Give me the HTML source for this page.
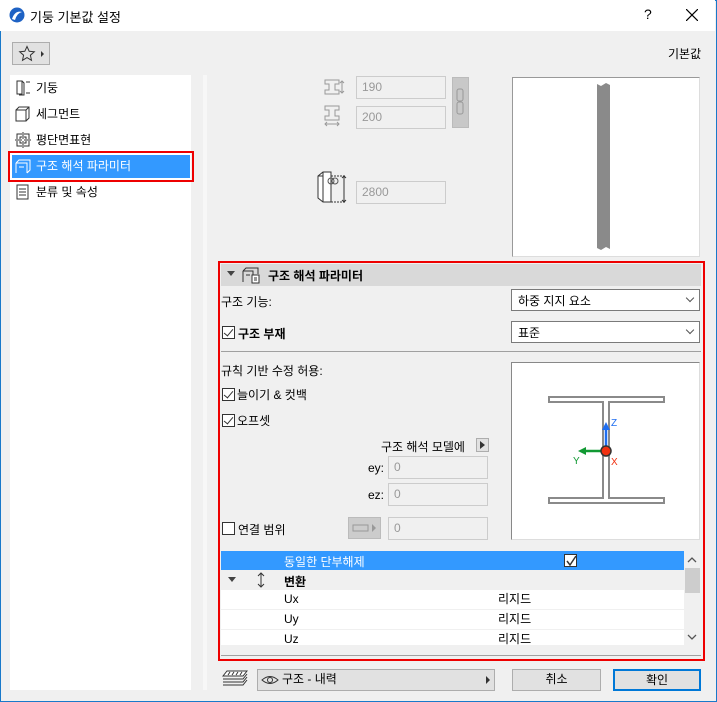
<!DOCTYPE html>
<html><head><meta charset="utf-8"><style>
*{box-sizing:border-box;margin:0;padding:0}
body{width:717px;height:702px;overflow:hidden;font-family:"Liberation Sans","Noto Sans CJK KR",sans-serif;font-size:12px;color:#000;background:#f0f0f0;position:relative}
.a{position:absolute}
.win{position:absolute;left:0;top:0;width:717px;height:702px;border:1px solid #1979ca;background:#f0f0f0}
.title{position:absolute;left:0;top:0;width:715px;height:31px;background:#fff}
.inp{position:absolute;background:#f0f0f0;border:1px solid #ccc;color:#999;padding:3px 0 0 5px;height:23px;width:90px}
.btn{position:absolute;border:1px solid #adadad;background:#e1e1e1;text-align:center;line-height:19px}
.dd{position:absolute;background:#fff;border:1px solid #7a7a7a;padding:2px 6px;height:22px;width:189px}
.dd:after{content:"";position:absolute;right:6px;top:5px;width:5px;height:5px;border-right:1px solid #555;border-bottom:1px solid #555;transform:rotate(45deg)}
.cb{position:absolute;width:13px;height:13px;border:1px solid #333;background:#fff}
.cb.c:after{content:"";position:absolute;left:3px;top:0px;width:4px;height:8px;border-right:1.5px solid #333;border-bottom:1.5px solid #333;transform:rotate(40deg)}
.li{position:absolute;left:18px;height:20px;line-height:20px}
.row{position:absolute;left:221px;width:463px;height:19px;line-height:19px;background:#fff}
</style></head><body>
<div class="win"></div>
<div class="title"></div>
<svg class="a" style="left:9px;top:7px" width="16" height="16"><circle cx="8" cy="8" r="7.5" fill="#1e62c4"/><path d="M3 12 Q6 3 13 5 Q8 6 6 13Z" fill="#fff"/></svg>
<div class="a" style="left:30px;top:7px;font-size:13px">기둥 기본값 설정</div>
<div class="a" style="left:644px;top:6px;font-size:14px">?</div>
<svg class="a" style="left:686px;top:9px" width="12" height="12"><path d="M0 0L12 12M12 0L0 12" stroke="#000" stroke-width="1.2"/></svg>

<div class="btn" style="left:12px;top:42px;width:38px;height:23px"></div>
<svg class="a" style="left:18px;top:45px" width="30" height="18"><path d="M9 1.5L11.2 6.3 16.3 6.8 12.4 10.2 13.5 15.3 9 12.6 4.5 15.3 5.6 10.2 1.7 6.8 6.8 6.3Z" fill="none" stroke="#333"/><path d="M23 6L26 9 23 12Z" fill="#333"/></svg>
<div class="a" style="left:668px;top:45px">기본값</div>

<div class="a" style="left:10px;top:75px;width:181px;height:615px;background:#fff"></div>
<svg class="a" style="left:15px;top:80px" width="16" height="16"><rect x="2" y="1" width="5" height="13" fill="none" stroke="#333"/><path d="M7 1L9 3V15H4" fill="none" stroke="#333"/><path d="M11 2h4M11 13h4" stroke="#333"/></svg>
<div class="li" style="left:36px;top:78px">기둥</div>
<svg class="a" style="left:15px;top:106px" width="16" height="16"><path d="M1 4h10v11H1zM1 4l3-3h10v11l-3 3M11 4l3-3" fill="none" stroke="#333"/></svg>
<div class="li" style="left:36px;top:104px">세그먼트</div>
<svg class="a" style="left:15px;top:132px" width="16" height="16"><rect x="2" y="2" width="12" height="12" fill="none" stroke="#333"/><rect x="5" y="5" width="6" height="6" fill="none" stroke="#333"/><path d="M8 0v16M0 8h16" stroke="#333" stroke-dasharray="1 2"/></svg>
<div class="li" style="left:36px;top:130px">평단면표현</div>
<div class="a" style="left:8px;top:151px;width:186px;height:31px;border:2px solid #e00"></div>
<div class="a" style="left:11px;top:154px;width:180px;height:25px;background:#3399ff;border:1px solid #fff"></div>
<svg class="a" style="left:15px;top:158px" width="16" height="16"><path d="M1 5h11v10M1 5v10M1 5l3-3h11v10l-3 3M4 9h5" fill="none" stroke="#fff"/></svg>
<div class="li" style="left:36px;top:156px;color:#fff">구조 해석 파라미터</div>
<svg class="a" style="left:15px;top:184px" width="16" height="16"><rect x="2" y="1" width="11" height="14" fill="none" stroke="#333"/><path d="M4 5h7M4 8h7M4 11h7" stroke="#333"/></svg>
<div class="li" style="left:36px;top:182px">분류 및 속성</div>

<div class="a" style="left:203px;top:75px;width:4px;height:615px;background:#f7f7f7"></div>

<svg class="a" style="left:324px;top:79px" width="26" height="48"><path d="M1 1h14v4h-4v6h4v4H1v-4h4V5H1z" fill="none" stroke="#999"/><path d="M18 2v12M16 4l2-2 2 2M16 12l2 2 2-2" fill="none" stroke="#999"/><path d="M1 27h14v4h-4v6h4v4H1v-4h4v-6H1z" fill="none" stroke="#999"/><path d="M1 45h14M3 43l-2 2 2 2M13 43l2 2-2 2" fill="none" stroke="#999"/></svg>
<div class="inp" style="left:356px;top:76px">190</div>
<div class="inp" style="left:356px;top:106px">200</div>
<div class="a" style="left:452px;top:77px;width:17px;height:51px;background:#c8c8c8;border:1px solid #bbb"></div>
<svg class="a" style="left:456px;top:88px" width="9" height="28"><rect x="1" y="1" width="6" height="12" rx="2" fill="none" stroke="#999"/><rect x="1" y="14" width="6" height="12" rx="2" fill="none" stroke="#999"/></svg>
<svg class="a" style="left:316px;top:170px" width="34" height="36"><path d="M2 6l5-4h8v30H7l-5-4z" fill="#fff" stroke="#333"/><path d="M7 2v30M7 6H2" fill="none" stroke="#333"/><circle cx="15" cy="11" r="3" fill="none" stroke="#555"/><circle cx="19" cy="11" r="3" fill="none" stroke="#555"/><path d="M15 6h14M15 32h14" stroke="#333" stroke-dasharray="2 1"/><path d="M28 6v26M26 8l2-2 2 2M26 30l2 2 2-2" fill="none" stroke="#333"/></svg>
<div class="inp" style="left:356px;top:181px">2800</div>

<div class="a" style="left:512px;top:77px;width:188px;height:180px;background:#fff;border:1px solid #999;border-right-color:#ddd;border-bottom-color:#ddd"></div>
<svg class="a" style="left:594px;top:81px" width="20" height="172"><path d="M3 3l4 2 5-3 4 2v164l-4-2-5 3-4-2z" fill="#8a8a8a"/></svg>

<div class="a" style="left:218px;top:261px;width:487px;height:400px;border:2px solid #e00"></div>
<div class="a" style="left:221px;top:264px;width:480px;height:22px;background:#d9d9d9"></div>
<svg class="a" style="left:227px;top:271px" width="8" height="6"><path d="M0 0h8L4 5z" fill="#444"/></svg>
<svg class="a" style="left:242px;top:266px" width="18" height="18"><path d="M1 5h10v11M1 5v11M1 5l3-3h12v6M4 9h4" fill="none" stroke="#333"/><rect x="10" y="9" width="7" height="8" fill="#fff" stroke="#333"/><path d="M12 12h3M12 14h3" stroke="#333"/></svg>
<div class="a" style="left:268px;top:267px;font-weight:bold">구조 해석 파라미터</div>

<div class="a" style="left:221px;top:293px">구조 기능:</div>
<div class="dd" style="left:511px;top:289px">하중 지지 요소</div>
<div class="cb c" style="left:222px;top:326px"></div>
<div class="a" style="left:238px;top:325px;font-weight:bold">구조 부재</div>
<div class="dd" style="left:511px;top:321px">표준</div>
<div class="a" style="left:221px;top:351px;width:480px;height:1px;background:#a0a0a0"></div>
<div class="a" style="left:221px;top:362px">규칙 기반 수정 허용:</div>
<div class="cb c" style="left:222px;top:388px"></div>
<div class="a" style="left:237px;top:386px">늘이기 &amp; 컷백</div>
<div class="cb c" style="left:222px;top:414px"></div>
<div class="a" style="left:237px;top:412px">오프셋</div>
<div class="a" style="left:381px;top:438px">구조 해석 모델에</div>
<div class="btn" style="left:476px;top:438px;width:13px;height:14px"></div>
<svg class="a" style="left:480px;top:441px" width="6" height="8"><path d="M0 0l5 4-5 4z" fill="#333"/></svg>
<div class="a" style="left:368px;top:461px">ey:</div>
<div class="inp" style="left:388px;top:456px;width:100px">0</div>
<div class="a" style="left:368px;top:488px">ez:</div>
<div class="inp" style="left:388px;top:483px;width:100px">0</div>
<div class="cb" style="left:222px;top:522px"></div>
<div class="a" style="left:238px;top:521px">연결 범위</div>
<div class="a" style="left:348px;top:517px;width:33px;height:22px;background:#ccc;border:1px solid #bbb"></div>
<svg class="a" style="left:352px;top:523px" width="26" height="10"><rect x="1" y="2" width="15" height="6" fill="none" stroke="#999"/><path d="M20 1l4 4-4 4z" fill="#999"/></svg>
<div class="inp" style="left:388px;top:517px;width:100px">0</div>

<div class="a" style="left:511px;top:362px;width:189px;height:178px;background:#fff;border:1px solid #888;border-right-color:#ddd;border-bottom-color:#ddd"></div>
<svg class="a" style="left:511px;top:362px" width="189" height="178"><g fill="none" stroke="#8a8a8a" stroke-width="2"><path d="M38 35h115v5H98v96h55v5H38v-5h54V40H38z"/></g><path d="M95 90V65" stroke="#1f6ef0" stroke-width="2.5"/><path d="M91 68l4-8 4 8z" fill="#1f6ef0"/><text x="100" y="64" font-size="10" fill="#1f6ef0" font-family="Liberation Sans">Z</text><path d="M93 89H72" stroke="#119933" stroke-width="2.5"/><path d="M75 85l-8 4 8 4z" fill="#119933"/><text x="62" y="102" font-size="10" fill="#119933" font-family="Liberation Sans">Y</text><circle cx="95" cy="89" r="5" fill="#f03010" stroke="#333" stroke-width="1.5"/><text x="100" y="103" font-size="10" fill="#f03010" font-family="Liberation Sans">X</text></svg>

<div class="a" style="left:221px;top:551px;width:463px;height:19px;background:#3399ff"></div>
<div class="a" style="left:284px;top:553px;color:#fff">동일한 단부해제</div>
<div class="a" style="left:564px;top:554px;width:13px;height:13px;border:1px solid #333;background:#fff"></div>
<svg class="a" style="left:565px;top:555px" width="12" height="12"><path d="M2 6l3 4 6-9" fill="none" stroke="#333" stroke-width="1.5"/></svg>
<div class="row" style="top:570px;background:#f0f0f0"></div>
<svg class="a" style="left:228px;top:577px" width="8" height="6"><path d="M0 0h8L4 5z" fill="#444"/></svg>
<svg class="a" style="left:257px;top:572px" width="8" height="16"><path d="M4 1v14M1 4l3-3 3 3M1 12l3 3 3-3" fill="none" stroke="#333"/></svg>
<div class="a" style="left:284px;top:573px;font-weight:bold">변환</div>
<div class="row" style="top:590px"><span class="a" style="left:63px">Ux</span><span class="a" style="left:277px">리지드</span></div>
<div class="row" style="top:610px"><span class="a" style="left:63px">Uy</span><span class="a" style="left:277px">리지드</span></div>
<div class="row" style="top:630px;height:15px;overflow:hidden"><span class="a" style="left:63px">Uz</span><span class="a" style="left:277px">리지드</span></div>
<div class="a" style="left:684px;top:551px;width:16px;height:94px;background:#f0f0f0"></div>
<div class="a" style="left:685px;top:568px;width:15px;height:25px;background:#cdcdcd"></div>
<svg class="a" style="left:687px;top:557px" width="10" height="84"><path d="M1 5l4-4 4 4M1 78l4 4 4-4" fill="none" stroke="#555" stroke-width="1.3"/></svg>
<div class="a" style="left:221px;top:655px;width:480px;height:1px;background:#a0a0a0"></div>

<svg class="a" style="left:222px;top:670px" width="26" height="17"><path d="M5 1h20l-4 5H1z" fill="#fff" stroke="#333"/><path d="M1 9h20l4-5M1 12h20l4-5M1 15h20l4-5" fill="none" stroke="#333"/><path d="M8 2l-2 3M12 2l-2 3M16 2l-2 3M20 2l-2 3" stroke="#333"/></svg>
<div class="btn" style="left:257px;top:669px;width:238px;height:22px;text-align:left;padding-left:24px">구조 - 내력</div>
<svg class="a" style="left:261px;top:675px" width="18" height="10"><path d="M1 5Q9-2 17 5Q9 12 1 5z" fill="none" stroke="#333"/><circle cx="9" cy="5" r="2.5" fill="none" stroke="#333"/></svg>
<svg class="a" style="left:486px;top:676px" width="5" height="8"><path d="M0 0l4 4-4 4z" fill="#333"/></svg>
<div class="btn" style="left:512px;top:669px;width:89px;height:22px">취소</div>
<div class="btn" style="left:613px;top:669px;width:88px;height:22px;border:2px solid #0078d7;line-height:18px">확인</div>
</body></html>
